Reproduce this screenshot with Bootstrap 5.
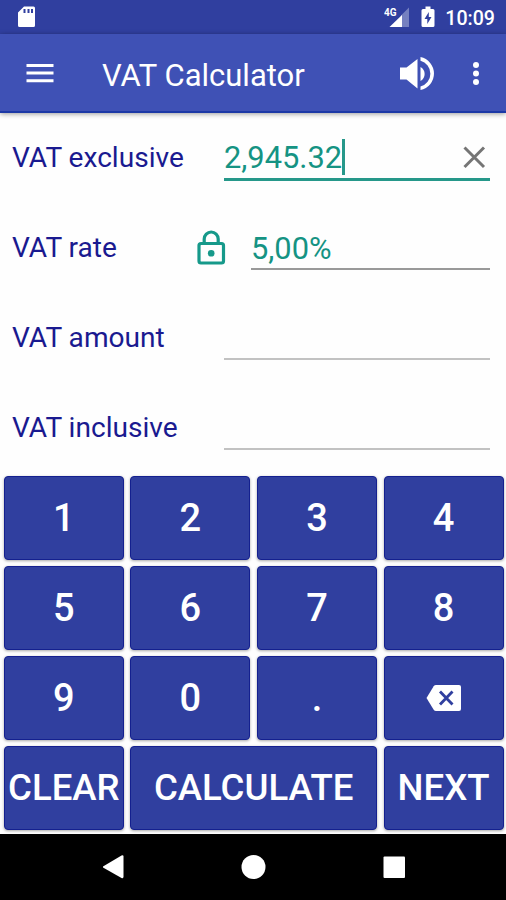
<!DOCTYPE html>
<html lang="en">
<head>
<meta charset="utf-8">
<meta name="viewport" content="width=device-width, initial-scale=1">
<title>VAT Calculator</title>
<link href="https://cdn.jsdelivr.net/npm/bootstrap@5.3.0/dist/css/bootstrap.min.css" rel="stylesheet">
<style>
  body { font-family: Roboto, "Liberation Sans", sans-serif; background: #fefefe; }
  svg { display: block; flex: none; }
  .screen { width: 506px; height: 900px; }
  .status-strip { height: 34px; background: #303f9f; padding: 0 11px 0 17px; }
  .clock { font-size: 19.6px; font-weight: 500; line-height: 32px; margin-left: 7px; padding-top: 3px; }
  .app-header { height: 79px; background: #3f51b5; border-bottom: 2px solid #1c38a6; box-shadow: 0 1px 5px rgba(0,0,0,.4); padding: 0 18px 0 24px; }
  .app-title { font-size: 31px; line-height: 1; margin-left: 46px; padding-top: 6px; }
  .dots { margin-left: 36px; margin-right: 8px; }
  .field-row { height: 90px; padding: 0 16px 0 12px; }
  .field-name { font-size: 28.1px; line-height: 90px; color: #1a1a90; width: 212px; }
  .entry { height: 44px; font-size: 30.8px; line-height: 46px; color: #159383; border-bottom: 2px solid #c2c2c2; }
  .entry.rate { border-bottom: 2px solid #999; margin-left: 15px; }
  .entry.active { height: 45px; border-bottom: 3px solid #26988a; }
  .figure-text { padding-top: 2px; }
  .caret { width: 3px; height: 36px; background: #26988a; }
  .lock-slot { width: 40px; margin-left: -28px; }
  .keypad { display: grid; grid-template-columns: repeat(4, 120px); grid-auto-rows: 84px; column-gap: 6.6px; row-gap: 6px; padding: 3px 0 0 3.8px; height: 361px; }
  .key { --bs-btn-color: #fff; --bs-btn-bg: #303f9f; --bs-btn-border-color: #14208f; --bs-btn-border-radius: 4px; --bs-btn-hover-color: #fff; --bs-btn-hover-bg: #394aae; --bs-btn-font-size: 38px; --bs-btn-font-weight: 500; --bs-btn-line-height: 1; box-shadow: 0 1px 3px rgba(0,0,0,.35); }
  .word { --bs-btn-font-size: 36.6px; }
  .wide { grid-column: span 2; }
  .system-nav { height: 66px; background: #000; }
</style>
</head>
<body>
<div class="screen d-flex flex-column overflow-hidden">
  <div class="status-strip d-flex align-items-center text-white">
    <svg width="20" height="22" viewBox="0 0 20 22"><path fill="#fff" fill-rule="evenodd" d="M7 .5h9.500a1.500 1.500 0 0 1 1.500 1.500v17.500a1.500 1.500 0 0 1-1.500 1.500H2.500A1.500 1.500 0 0 1 1 19.500V6.500zM6.500 3v4h2V3zm4 0v4h2V3zm3.500 0v4h2V3z"/></svg>
    <svg class="ms-auto" width="26" height="22" viewBox="0 0 26 22"><path fill="#7580c0" d="M25 1.500v19.500h-8V9.500z"/><path fill="#fff" d="M18 9v12H5.500z"/><path d="M0 0h13v10.500H0z" fill="#303f9f"/><text x="0" y="9.500" font-size="10.500" font-weight="700" fill="#fff" textLength="12.500" lengthAdjust="spacingAndGlyphs">4G</text></svg>
    <svg class="ms-2" width="20" height="22" viewBox="0 0 20 22"><path fill="#fff" fill-rule="evenodd" d="M7.500.500h5V3H15a1.500 1.500 0 0 1 1.500 1.500v15A1.500 1.500 0 0 1 15 21H5a1.500 1.500 0 0 1-1.500-1.500v-15A1.500 1.500 0 0 1 5 3h2.500zM10.800 6 6.500 13h2.800v5l4.200-7h-2.700z"/></svg>
    <span class="clock">10:09</span>
  </div>
  <header class="app-header d-flex align-items-center text-white position-relative">
    <svg width="32" height="22" viewBox="0 0 32 22"><path fill="#fff" d="M2.500 2h27v3h-27zm0 7.600h27v3h-27zm0 7.600h27v3h-27z"/></svg>
    <h1 class="app-title fw-normal mb-0">VAT Calculator</h1>
    <svg class="ms-auto" width="36" height="36" viewBox="0 0 36 36"><path fill="#fff" d="M0 12.500V24.500h6.500l11 9V4l-11 8.500zM20.500 12v14a8 8 0 0 0 0-14zM20.500 2v3.800a13.300 13.300 0 0 1 0 25.700v3.600a16.900 16.900 0 0 0 0-33.100z"/></svg>
    <svg class="dots" width="8" height="26" viewBox="0 0 8 26"><g fill="#fff"><circle cx="4" cy="5" r="3"/><circle cx="4" cy="13.500" r="3"/><circle cx="4" cy="22" r="3"/></g></svg>
  </header>
  <main class="flex-grow-1">
    <div class="field-row d-flex align-items-center">
      <label class="field-name">VAT exclusive</label>
      <div class="entry active flex-grow-1 d-flex align-items-center">
        <span class="figure-text">2,945.32</span><span class="caret"></span>
        <svg class="ms-auto me-1" width="24" height="24" viewBox="0 0 24 24"><path d="M2.500 2.500l19.500 19.500M22 2.500 2.500 22" stroke="#757575" stroke-width="3" fill="none"/></svg>
      </div>
    </div>
    <div class="field-row d-flex align-items-center">
      <label class="field-name">VAT rate</label>
      <div class="lock-slot"><svg width="30" height="36" viewBox="0 0 30 36"><g fill="none" stroke="#16998a" stroke-width="3.200"><rect x="3" y="13.500" width="24.500" height="19.500" rx="2"/><path d="M8.200 13.500V9a7 7 0 0 1 14 0v4.500"/></g><circle cx="15.200" cy="23.300" r="3.300" fill="#16998a"/></svg></div>
      <div class="entry rate flex-grow-1">5,00%</div>
    </div>
    <div class="field-row d-flex align-items-center">
      <label class="field-name">VAT amount</label><div class="entry flex-grow-1"></div>
    </div>
    <div class="field-row d-flex align-items-center">
      <label class="field-name">VAT inclusive</label><div class="entry flex-grow-1"></div>
    </div>
    <div class="keypad">
      <button class="btn key p-0">1</button><button class="btn key p-0">2</button><button class="btn key p-0">3</button><button class="btn key p-0">4</button>
      <button class="btn key p-0">5</button><button class="btn key p-0">6</button><button class="btn key p-0">7</button><button class="btn key p-0">8</button>
      <button class="btn key p-0">9</button><button class="btn key p-0">0</button><button class="btn key p-0">.</button>
      <button class="btn key p-0 d-flex align-items-center justify-content-center" aria-label="Backspace"><svg width="36" height="28" viewBox="0 0 36 28"><path fill="#fff" d="M10 1h23a2 2 0 0 1 2 2v22a2 2 0 0 1-2 2H10a3 3 0 0 1-2.300-1.200L.500 14 7.700 2.200A3 3 0 0 1 10 1z"/><path d="m14 7.500 12.500 13m0-13L14 20.500" stroke="#303f9f" stroke-width="2.800"/></svg></button>
      <button class="btn key word p-0">CLEAR</button><button class="btn key word p-0 wide">CALCULATE</button><button class="btn key word p-0">NEXT</button>
    </div>
  </main>
  <nav class="system-nav d-flex align-items-center justify-content-center">
    <svg width="506" height="66" viewBox="0 0 506 66"><g fill="#fff"><path d="M103 32.500 121.500 21.500q2-1 2 1v20q0 2.500-2 1.500L103 33.500z"/><circle cx="253.500" cy="33" r="12"/><rect x="383.500" y="22.500" width="21.500" height="21.500" rx="1"/></g></svg>
  </nav>
</div>
<script src="https://cdn.jsdelivr.net/npm/bootstrap@5.3.0/dist/js/bootstrap.bundle.min.js"></script>
</body>
</html>
